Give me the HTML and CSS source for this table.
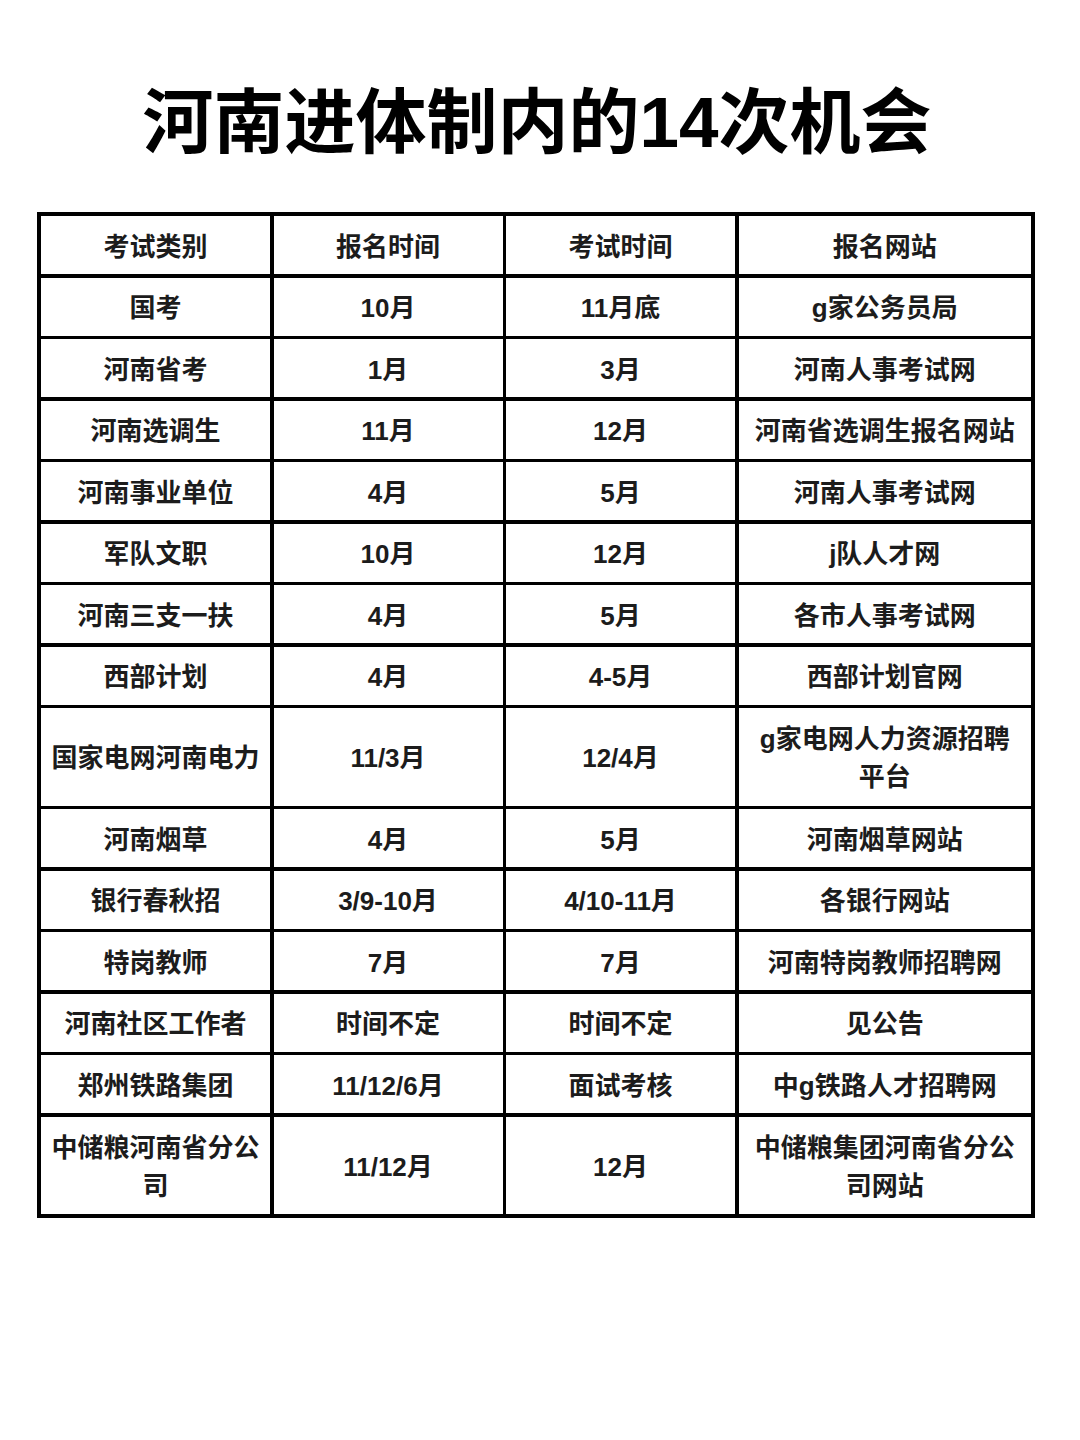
FILE: index.html
```html
<!DOCTYPE html>
<html lang="zh">
<head>
<meta charset="utf-8">
<title>河南进体制内的14次机会</title>
<link rel="stylesheet" href="styles.css">
</head>
<body>
<main class="page">
  <h1 class="title">河南进体制内的14次机会</h1>
  <div class="table">
    <div class="cell">考试类别</div><div class="cell">报名时间</div><div class="cell">考试时间</div><div class="cell">报名网站</div>
    <div class="cell">国考</div><div class="cell">10月</div><div class="cell">11月底</div><div class="cell">g家公务员局</div>
    <div class="cell">河南省考</div><div class="cell">1月</div><div class="cell">3月</div><div class="cell">河南人事考试网</div>
    <div class="cell">河南选调生</div><div class="cell">11月</div><div class="cell">12月</div><div class="cell">河南省选调生报名网站</div>
    <div class="cell">河南事业单位</div><div class="cell">4月</div><div class="cell">5月</div><div class="cell">河南人事考试网</div>
    <div class="cell">军队文职</div><div class="cell">10月</div><div class="cell">12月</div><div class="cell">j队人才网</div>
    <div class="cell">河南三支一扶</div><div class="cell">4月</div><div class="cell">5月</div><div class="cell">各市人事考试网</div>
    <div class="cell">西部计划</div><div class="cell">4月</div><div class="cell">4-5月</div><div class="cell">西部计划官网</div>
    <div class="cell">国家电网河南电力</div><div class="cell">11/3月</div><div class="cell">12/4月</div><div class="cell">g家电网人力资源招聘<br>平台</div>
    <div class="cell">河南烟草</div><div class="cell">4月</div><div class="cell">5月</div><div class="cell">河南烟草网站</div>
    <div class="cell">银行春秋招</div><div class="cell">3/9-10月</div><div class="cell">4/10-11月</div><div class="cell">各银行网站</div>
    <div class="cell">特岗教师</div><div class="cell">7月</div><div class="cell">7月</div><div class="cell">河南特岗教师招聘网</div>
    <div class="cell">河南社区工作者</div><div class="cell">时间不定</div><div class="cell">时间不定</div><div class="cell">见公告</div>
    <div class="cell">郑州铁路集团</div><div class="cell">11/12/6月</div><div class="cell">面试考核</div><div class="cell">中g铁路人才招聘网</div>
    <div class="cell">中储粮河南省分公<br>司</div><div class="cell">11/12月</div><div class="cell">12月</div><div class="cell">中储粮集团河南省分公<br>司网站</div>
  </div>
</main>
</body>
</html>
```

FILE: styles.css
```css
html, body {
  margin: 0;
  padding: 0;
  background: #ffffff;
}

.page {
  width: 1080px;
  height: 1440px;
  box-sizing: border-box;
  padding-top: 82px;
  font-family: "Liberation Sans", "Noto Sans CJK SC", sans-serif;
  color: #1a1a1a;
}

.title {
  margin: 0 6px 48px 0;
  text-align: center;
  font-family: "Liberation Sans", "Noto Sans CJK SC", sans-serif;
  font-weight: 700;
  font-size: 71px;
  line-height: 82px;
  color: #000;
}

.table {
  margin-left: 37px;
  width: 998px;
  box-sizing: border-box;
  display: grid;
  grid-template-columns: 229px 229px 229px 1fr;
  grid-template-rows: repeat(8, 58px) 97.5px repeat(5, 58px) 97.5px;
  gap: 3.5px;
  padding: 4px;
  background: #000;
}

.cell {
  background: #fff;
  display: flex;
  align-items: center;
  justify-content: center;
  text-align: center;
  padding-top: 3px;
  font-size: 26px;
  font-weight: 600;
  line-height: 38px;
  color: #1c1c1c;
}
```
